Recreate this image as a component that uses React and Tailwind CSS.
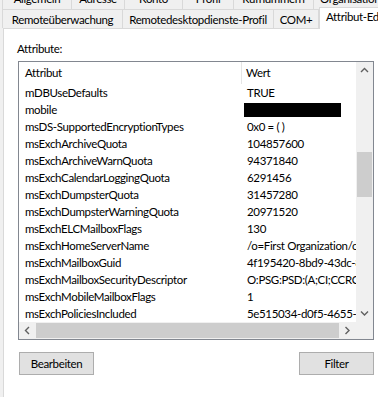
import React from "react";

const rows = [
  ["mDBUseDefaults", "TRUE"],
  ["mobile", null],
  ["msDS-SupportedEncryptionTypes", "0x0 = ( )"],
  ["msExchArchiveQuota", "104857600"],
  ["msExchArchiveWarnQuota", "94371840"],
  ["msExchCalendarLoggingQuota", "6291456"],
  ["msExchDumpsterQuota", "31457280"],
  ["msExchDumpsterWarningQuota", "20971520"],
  ["msExchELCMailboxFlags", "130"],
  ["msExchHomeServerName", "/o=First Organization/ou=Exchange Administrative Group"],
  ["msExchMailboxGuid", "4f195420-8bd9-43dc-8a6e-1c2f3b4d5e6f"],
  ["msExchMailboxSecurityDescriptor", "O:PSG:PSD:(A;CI;CCRC;;;PS)"],
  ["msExchMobileMailboxFlags", "1"],
  ["msExchPoliciesIncluded", "5e515034-d0f5-4655-b1a2-3c4d5e6f7a8b"],
];

const Chevron = ({ dir }) => {
  const paths = {
    up: "M1 5 L4.5 1.5 L8 5",
    down: "M1 1.5 L4.5 5 L8 1.5",
    left: "M5 1 L1.5 4.5 L5 8",
    right: "M1.5 1 L5 4.5 L1.5 8",
  };
  const vert = dir === "up" || dir === "down";
  return (
    <svg width={vert ? 9 : 7} height={vert ? 7 : 9} viewBox={vert ? "0 0 9 7" : "0 0 7 9"}>
      <path d={paths[dir]} fill="none" stroke="#606060" strokeWidth="1.4" />
    </svg>
  );
};

export default function App() {
  return (
    <div
      className="w-[378px] h-[397px] overflow-hidden bg-[#f0f0f0] text-[11.5px] tracking-[-0.35px] text-black flex flex-col"
      style={{ fontFamily: 'Lato, "Liberation Sans", Arial, sans-serif' }}
    >
      {/* Tab row 1 */}
      <div className="flex h-[20px] -mt-[11px] ml-[2px] shrink-0 leading-[18px] whitespace-nowrap">
        <div className="w-[70px] shrink-0 border border-b-0 border-[#d9d9d9] text-center">Allgemein</div>
        <div className="w-[53px] shrink-0 border-t border-r border-[#d9d9d9] text-center">Adresse</div>
        <div className="w-[58px] shrink-0 border-t border-r border-[#d9d9d9] text-center">Konto</div>
        <div className="w-[51px] shrink-0 border-t border-r border-[#d9d9d9] text-center">Profil</div>
        <div className="w-[80px] shrink-0 border-t border-r border-[#d9d9d9] text-center">Rufnummern</div>
        <div className="w-[80px] shrink-0 border-t border-r border-[#d9d9d9] pl-[6px]">Organisation</div>
      </div>
      {/* Tab row 2 */}
      <div className="flex h-[19px] ml-[2px] shrink-0 leading-[19px] relative z-10 whitespace-nowrap">
        <div className="w-[121px] shrink-0 border border-b-0 border-[#d9d9d9] text-center">Remoteüberwachung</div>
        <div className="w-[151px] shrink-0 border-t border-r border-[#d9d9d9] text-center">Remotedesktopdienste-Profil</div>
        <div className="w-[45px] shrink-0 border-t border-r border-[#d9d9d9] text-center">COM+</div>
        <div className="w-[80px] shrink-0 h-[22px] -mt-[2px] bg-white border-t border-l border-[#d9d9d9] pl-[6px] leading-[18px] overflow-hidden">
          Attribut-Editor
        </div>
      </div>
      {/* Panel */}
      <div className="flex-1 ml-[3px] bg-white border-l border-t border-[#d9d9d9] flex flex-col">
        <div className="pl-[13px] mt-[12px] leading-[15px]">Attribute:</div>
        {/* list box */}
        <div className="ml-[14px] mt-[5px] w-[356px] border border-[#828790] flex flex-col">
          <div className="flex">
            <div className="w-[337px] overflow-hidden">
              {/* header */}
              <div className="flex h-[22px] leading-[22px]">
                <div className="w-[223px] pl-[6px] border-r border-[#e5e5e5] shrink-0">Attribut</div>
                <div className="pl-[4px] whitespace-nowrap">Wert</div>
              </div>
              {rows.map(([a, v]) => (
                <div key={a} className="flex h-[17px] leading-[17px] whitespace-nowrap">
                  <div className="w-[223px] pl-[6px] shrink-0">{a}</div>
                  <div className="pl-[5px] flex items-center">
                    {v === null ? <div className="w-[97px] h-[14px] bg-black -ml-[3px]" /> : v}
                  </div>
                </div>
              ))}
            </div>
            {/* vertical scrollbar */}
            <div className="w-[17px] bg-[#f0f0f0] flex flex-col items-center">
              <div className="h-[17px] flex items-center justify-center">
                <Chevron dir="up" />
              </div>
              <div className="h-[73px]" />
              <div className="w-[15px] h-[45px] bg-[#cdcdcd]" />
              <div className="flex-1" />
              <div className="h-[17px] flex items-center justify-center">
                <Chevron dir="down" />
              </div>
            </div>
          </div>
          {/* horizontal scrollbar */}
          <div className="flex h-[17px]">
            <div className="w-[337px] bg-[#f0f0f0] flex items-center">
              <div className="w-[17px] h-[17px] flex items-center justify-center">
                <Chevron dir="left" />
              </div>
              <div className="flex-1 h-[15px] bg-[#cdcdcd]" />
              <div className="w-[17px] h-[17px] flex items-center justify-center">
                <Chevron dir="right" />
              </div>
            </div>
            <div className="w-[17px] bg-[#f0f0f0]" />
          </div>
        </div>
        {/* buttons */}
        <div className="flex justify-between ml-[15px] w-[355px] mt-[12px]">
          <button className="w-[75px] h-[23px] bg-[#e1e1e1] border border-[#adadad]">Bearbeiten</button>
          <button className="w-[75px] h-[23px] bg-[#e1e1e1] border border-[#adadad]">Filter</button>
        </div>
      </div>
    </div>
  );
}
